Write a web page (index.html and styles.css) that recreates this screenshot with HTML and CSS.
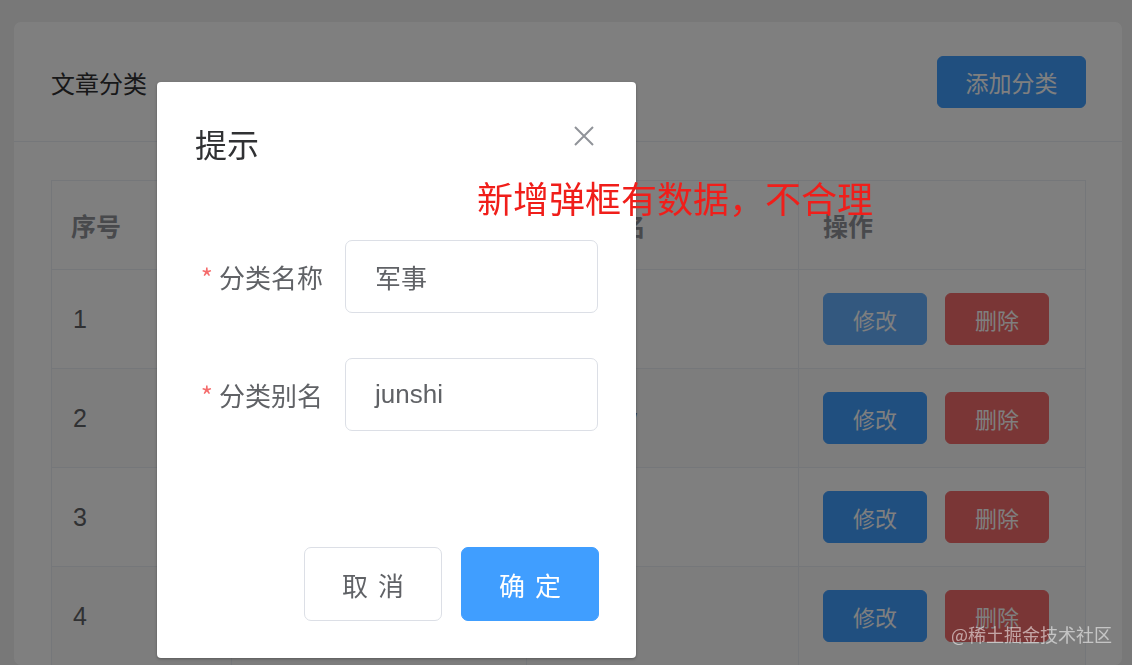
FILE: index.html
```html
<!DOCTYPE html>
<html lang="zh">
<head>
<meta charset="utf-8">
<title>文章分类</title>
<link rel="stylesheet" href="styles.css">
</head>
<body>
<div class="page">
  <div class="card">
    <div class="card-header">
      <span class="card-title">文章分类</span>
      <button class="btn btn-primary btn-add">添加分类</button>
    </div>
    <div class="card-body">
      <table class="table">
        <colgroup>
          <col class="c-idx"><col class="c-name"><col class="c-alias"><col class="c-op">
        </colgroup>
        <thead>
          <tr><th>序号</th><th>分类名称</th><th>分类别名</th><th class="op">操作</th></tr>
        </thead>
        <tbody>
          <tr><td>1</td><td>军事</td><td>junshi</td><td class="op"><button class="btn btn-primary btn-sm is-hover">修改</button><button class="btn btn-danger btn-sm">删除</button></td></tr>
          <tr class="striped"><td>2</td><td>体育</td><td>tiyuxinw</td><td class="op"><button class="btn btn-primary btn-sm">修改</button><button class="btn btn-danger btn-sm">删除</button></td></tr>
          <tr><td>3</td><td>娱乐</td><td>yule</td><td class="op"><button class="btn btn-primary btn-sm">修改</button><button class="btn btn-danger btn-sm">删除</button></td></tr>
          <tr class="striped"><td>4</td><td>科技</td><td>keji</td><td class="op"><button class="btn btn-primary btn-sm">修改</button><button class="btn btn-danger btn-sm">删除</button></td></tr>
        </tbody>
      </table>
    </div>
  </div>
</div>

<div class="mask"></div>

<div class="dialog">
  <div class="dialog-header">
    <span class="dialog-title">提示</span>
    <button class="dialog-close" aria-label="关闭">
      <svg width="20" height="20" viewBox="0 0 20 20"><path d="M1 1 L19 19 M19 1 L1 19" stroke="#909399" stroke-width="2" fill="none"/></svg>
    </button>
  </div>
  <div class="dialog-body">
    <div class="form-item">
      <label class="form-label"><span class="req">*</span>分类名称</label>
      <div class="input">军事</div>
    </div>
    <div class="form-item">
      <label class="form-label"><span class="req">*</span>分类别名</label>
      <div class="input">junshi</div>
    </div>
  </div>
  <div class="dialog-footer">
    <button class="btn btn-default btn-lg">取消</button>
    <button class="btn btn-primary btn-lg">确定</button>
  </div>
</div>

<div class="annotation">新增弹框有数据，不合理</div>
<div class="watermark">@稀土掘金技术社区</div>
</body>
</html>
```

FILE: styles.css
```css
* { box-sizing: border-box; }
html, body {
  margin: 0;
  height: 100%;
  overflow: hidden;
}
body {
  background: #f0f0f0;
  font-family: "Liberation Sans", "Noto Sans CJK SC", sans-serif;
  color: #606266;
}
.page {
  padding: 22px 10px 0 14px;
}
.card {
  background: #fff;
  border-radius: 7px;
  height: 643px;
  overflow: hidden;
}
.card-header {
  height: 120px;
  padding: 0 36px 0 37px;
  display: flex;
  align-items: center;
  justify-content: space-between;
  border-bottom: 1px solid #ebeef5;
}
.card-title {
  font-size: 24px;
  color: #303133;
  margin-top: 2px;
}
.btn {
  font-family: "Noto Sans CJK SC", sans-serif;
  border: 1px solid transparent;
  border-radius: 6px;
  cursor: pointer;
  padding: 0;
}
.btn-primary { background: #409eff; border-color: #409eff; color: #fff; }
.btn-danger { background: #f56c6c; border-color: #f56c6c; color: #fff; }
.btn-default { background: #fff; border-color: #dcdfe6; color: #606266; }
.btn-add {
  width: 149px;
  height: 52px;
  font-size: 23px;
  margin-top: 1px;
}
.card-body {
  padding: 38px 36px 0 37px;
}
.table {
  width: 100%;
  border-collapse: collapse;
  table-layout: fixed;
  font-size: 25px;
  border: 1px solid #ebeef5;
}
.c-idx { width: 180px; }
.c-name { width: 295px; }
.c-alias { width: 272px; }
.c-op { width: auto; }
.table th, .table td {
  border: 1px solid #ebeef5;
  text-align: left;
  padding: 0 18px 0 19px;
  white-space: nowrap;
  overflow: hidden;
}
.table th {
  height: 89px;
  font-weight: bold;
  color: #909399;
  font-family: "Noto Sans CJK SC", sans-serif;
}
.table td {
  height: 99px;
  color: #606266;
  padding-left: 21px;
}
.table .op { padding-left: 24px; }
.table td.op { padding-left: 24px; }
.table tr.striped td { background: #fafafa; }
.btn-sm {
  width: 104px;
  height: 52px;
  font-size: 22px;
  margin-right: 18px;
  vertical-align: middle;
}
.btn-sm.is-hover { background: #66b1ff; border-color: #66b1ff; }

.mask {
  position: fixed;
  inset: 0;
  background: rgba(0, 0, 0, 0.5);
}
.dialog {
  position: absolute;
  left: 157px;
  top: 82px;
  width: 479px;
  height: 576px;
  background: #fff;
  border-radius: 4px;
  box-shadow: 0 1px 3px rgba(0,0,0,.3);
  display: flex;
  flex-direction: column;
}
.dialog-header {
  position: relative;
  padding: 39px 38px 18px 38px;
}
.dialog-title {
  display: block;
  font-size: 32px;
  line-height: 44px;
  color: #303133;
  font-family: "Noto Sans CJK SC", sans-serif;
}
.dialog-close {
  position: absolute;
  left: 417px;
  top: 44px;
  width: 20px;
  height: 20px;
  padding: 0;
  border: 0;
  background: none;
  display: flex;
}
.dialog-body {
  padding: 57px 38px 0 38px;
  flex: 1;
}
.form-item {
  display: flex;
  align-items: center;
  margin-bottom: 45px;
}
.form-label {
  width: 150px;
  padding-right: 22px;
  text-align: right;
  font-size: 26px;
  color: #606266;
  font-family: "Noto Sans CJK SC", sans-serif;
  white-space: nowrap;
}
.req {
  color: #f56c6c;
  margin-right: 6px;
}
.input {
  width: 253px;
  height: 73px;
  border: 1px solid #dcdfe6;
  border-radius: 7px;
  padding-left: 29px;
  display: flex;
  align-items: center;
  font-size: 26px;
  color: #606266;
}
.dialog-footer {
  display: flex;
  justify-content: flex-end;
  gap: 19px;
  padding: 0 37px 37px 0;
}
.btn-lg {
  width: 138px;
  height: 74px;
  font-size: 26px;
  letter-spacing: 10px;
  text-indent: 10px;
  border-radius: 7px;
}
.annotation {
  position: absolute;
  left: 477px;
  top: 174px;
  font-family: "Noto Sans CJK SC", sans-serif;
  font-size: 36px;
  line-height: 46px;
  color: #f01e1a;
}
.watermark {
  position: absolute;
  right: 20px;
  top: 621px;
  font-family: "Noto Sans CJK SC", sans-serif;
  font-size: 18px;
  color: rgba(255, 255, 255, 0.55);
}
```
